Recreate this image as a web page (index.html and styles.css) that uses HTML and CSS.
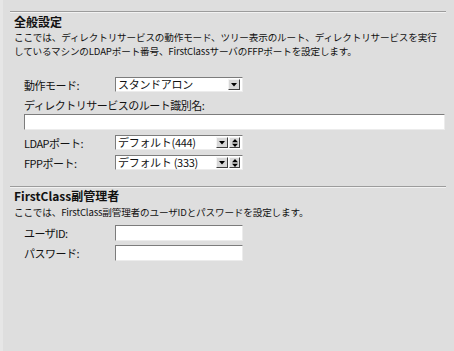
FILE: index.html
```html
<!DOCTYPE html>
<html lang="ja">
<head>
  <meta charset="UTF-8">
  <title>ディレクトリサービス設定</title>
  <link rel="stylesheet" href="styles.css">
</head>
<body>
  <div class="page">
    <!-- General settings -->
    <section class="group general">
      <h2>全般設定</h2>
      <p class="desc">ここでは、ディレクトリサービスの動作モード、ツリー表示のルート、ディレクトリサービスを実行<br>しているマシンのLDAPポート番号、FirstClassサーバのFFPポートを設定します。</p>
      <div class="fields">
        <div class="row">
          <label>動作モード:</label>
          <div class="sel">
            <span class="sel-text">スタンドアロン</span>
            <span class="btn"><svg width="6" height="4" viewBox="0 0 6 4"><path d="M0 0H6L3 3.5Z" fill="#000"/></svg></span>
          </div>
        </div>
        <label class="wide-label">ディレクトリサービスのルート識別名:</label>
        <div class="field wide"></div>
        <div class="row gap">
          <label>LDAPポート:</label>
          <div class="sel">
            <span class="sel-text">デフォルト(444)</span>
            <span class="btn"><svg width="6" height="4" viewBox="0 0 6 4"><path d="M0 0H6L3 3.5Z" fill="#000"/></svg></span>
            <span class="btn spin"><svg width="6" height="8" viewBox="0 0 6 8"><path d="M3 0L6 3.2H0Z M0 4.8H6L3 8Z" fill="#000"/></svg></span>
          </div>
        </div>
        <div class="row gap">
          <label>FPPポート:</label>
          <div class="sel">
            <span class="sel-text">デフォルト (333)</span>
            <span class="btn"><svg width="6" height="4" viewBox="0 0 6 4"><path d="M0 0H6L3 3.5Z" fill="#000"/></svg></span>
            <span class="btn spin"><svg width="6" height="8" viewBox="0 0 6 8"><path d="M3 0L6 3.2H0Z M0 4.8H6L3 8Z" fill="#000"/></svg></span>
          </div>
        </div>
      </div>
    </section>

    <!-- Sub administrator -->
    <section class="group admin">
      <h2>FirstClass副管理者</h2>
      <p class="desc">ここでは、FirstClass副管理者のユーザIDとパスワードを設定します。</p>
      <div class="fields">
        <div class="row">
          <label>ユーザID:</label>
          <div class="field short"></div>
        </div>
        <div class="row gap-sm">
          <label>パスワード:</label>
          <div class="field short"></div>
        </div>
      </div>
    </section>
  </div>
</body>
</html>
```

FILE: styles.css
```css
/* General */
html, body {
  margin: 0;
  padding: 0;
  height: 100%;
}

body {
  background-color: #dedede;
  color: #111;
  font-family: "Noto Sans CJK JP", "Noto Sans", sans-serif;
}

.page {
  height: 100%;
  padding-top: 11px;
  box-sizing: border-box;
  border-left: 3px solid #e6e6e6;
}

/* Groups */
.group {
  margin: 0 8px 0 7px;
  padding-left: 4px;
  border-top: 1px solid #9c9c9c;
  box-shadow: inset 0 1px 0 #f2f2f2;
}

.group h2 {
  margin: 1px 0 0;
  font-size: 12px;
  line-height: 17px;
  font-weight: bold;
}

.admin h2 {
  margin-top: 0;
}

.desc {
  margin: 0;
  font-size: 9.6px;
  line-height: 14px;
  letter-spacing: -0.16px;
  white-space: nowrap;
}

.admin .desc {
  margin-top: 1px;
}

.general {
  padding-bottom: 16px;
}

/* Fields */
.fields {
  display: flex;
  flex-direction: column;
  padding: 0 1px 0 10px;
  margin-top: 19px;
}

.admin .fields {
  margin-top: 6px;
}

.row {
  display: flex;
  align-items: center;
  height: 15px;
}

.row.gap {
  margin-top: 5px;
}

.row.gap-sm {
  margin-top: 4px;
}

.admin .row {
  height: 16px;
}

.row label,
.wide-label {
  font-size: 11px;
  line-height: 16px;
  letter-spacing: -0.5px;
  white-space: nowrap;
}

.row label {
  width: 91px;
  flex-shrink: 0;
}

.wide-label {
  margin-top: 5px;
}

.field {
  background: #fff;
  border-top: 1px solid #7c7c7c;
  border-left: 1px solid #7c7c7c;
  border-right: 1px solid #ececec;
  border-bottom: 1px solid #ececec;
  box-sizing: border-box;
  height: 16px;
}

.field.wide {
  margin-top: 1px;
}

.field.short {
  width: 128px;
}

/* Select boxes */
.sel {
  display: flex;
  align-items: center;
  width: 128px;
  height: 15px;
  box-sizing: border-box;
  padding-right: 2px;
  gap: 1px;
  background: #fff;
  border-top: 1px solid #7c7c7c;
  border-left: 1px solid #7c7c7c;
  border-right: 1px solid #ececec;
  border-bottom: 1px solid #ececec;
}

.sel-text {
  flex: 1;
  padding-left: 2px;
  font-size: 11px;
  line-height: 13px;
  letter-spacing: -0.3px;
  white-space: nowrap;
}

.btn {
  display: flex;
  align-items: center;
  justify-content: center;
  width: 10px;
  height: 9px;
  background: #d8d8d8;
  border-top: 1px solid #f4f4f4;
  border-left: 1px solid #f4f4f4;
  border-right: 1px solid #404040;
  border-bottom: 1px solid #404040;
}

.btn.spin {
  width: 9px;
}
```
